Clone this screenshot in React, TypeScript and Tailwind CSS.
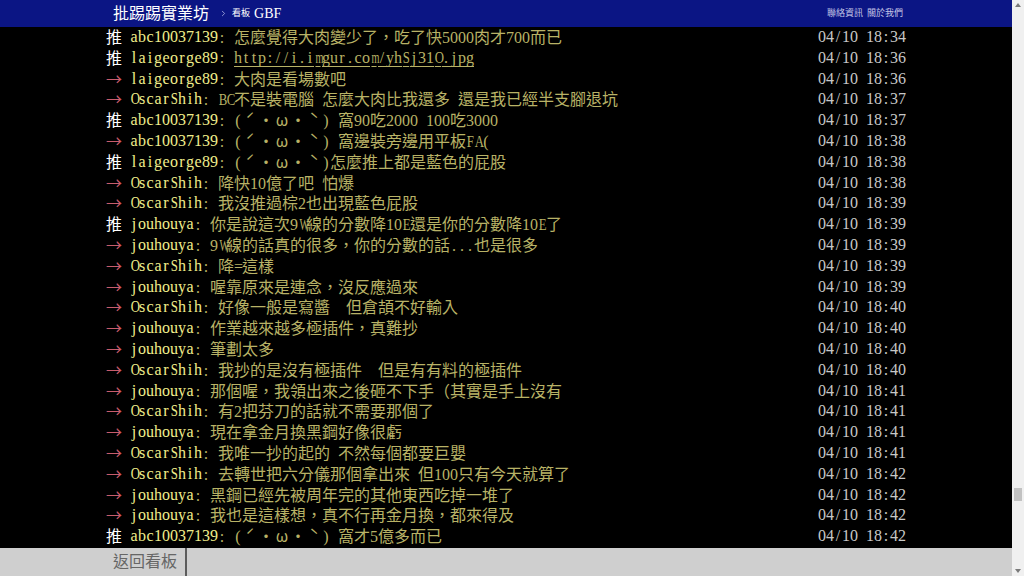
import { ChevronRight } from 'lucide-react';

type Push = {
  tag: '推' | '→';
  user: string;
  text: string;
  time: string;
  link?: boolean;
};

const face = '(ˊ・ω・ˋ)';

const pushes: Push[] = [
  { tag: '推', user: 'abc10037139', text: '怎麼覺得大肉變少了，吃了快5000肉才700而已', time: '04/10 18:34' },
  { tag: '推', user: 'laigeorge89', text: 'http://i.imgur.com/yhSj31O.jpg', time: '04/10 18:36', link: true },
  { tag: '→', user: 'laigeorge89', text: '大肉是看場數吧', time: '04/10 18:36' },
  { tag: '→', user: 'OscarShih', text: 'BC不是裝電腦 怎麼大肉比我還多 還是我已經半支腳退坑', time: '04/10 18:37' },
  { tag: '推', user: 'abc10037139', text: `${face} 窩90吃2000 100吃3000`, time: '04/10 18:37' },
  { tag: '→', user: 'abc10037139', text: `${face} 窩邊裝旁邊用平板FA(`, time: '04/10 18:38' },
  { tag: '推', user: 'laigeorge89', text: `${face}怎麼推上都是藍色的屁股`, time: '04/10 18:38' },
  { tag: '→', user: 'OscarShih', text: '降快10億了吧 怕爆', time: '04/10 18:38' },
  { tag: '→', user: 'OscarShih', text: '我沒推過棕2也出現藍色屁股', time: '04/10 18:39' },
  { tag: '推', user: 'jouhouya', text: '你是說這次9W線的分數降10E還是你的分數降10E了', time: '04/10 18:39' },
  { tag: '→', user: 'jouhouya', text: '9W線的話真的很多，你的分數的話...也是很多', time: '04/10 18:39' },
  { tag: '→', user: 'OscarShih', text: '降=這樣', time: '04/10 18:39' },
  { tag: '→', user: 'jouhouya', text: '喔靠原來是連念，沒反應過來', time: '04/10 18:39' },
  { tag: '→', user: 'OscarShih', text: '好像一般是寫醬  但倉頡不好輸入', time: '04/10 18:40' },
  { tag: '→', user: 'jouhouya', text: '作業越來越多極插件，真難抄', time: '04/10 18:40' },
  { tag: '→', user: 'jouhouya', text: '筆劃太多', time: '04/10 18:40' },
  { tag: '→', user: 'OscarShih', text: '我抄的是沒有極插件  但是有有料的極插件', time: '04/10 18:40' },
  { tag: '→', user: 'jouhouya', text: '那個喔，我領出來之後砸不下手（其實是手上沒有', time: '04/10 18:41' },
  { tag: '→', user: 'OscarShih', text: '有2把芬刀的話就不需要那個了', time: '04/10 18:41' },
  { tag: '→', user: 'jouhouya', text: '現在拿金月換黑鋼好像很虧', time: '04/10 18:41' },
  { tag: '→', user: 'OscarShih', text: '我唯一抄的起的 不然每個都要巨嬰', time: '04/10 18:41' },
  { tag: '→', user: 'OscarShih', text: '去轉世把六分儀那個拿出來 但100只有今天就算了', time: '04/10 18:42' },
  { tag: '→', user: 'jouhouya', text: '黑鋼已經先被周年完的其他東西吃掉一堆了', time: '04/10 18:42' },
  { tag: '→', user: 'jouhouya', text: '我也是這樣想，真不行再金月換，都來得及', time: '04/10 18:42' },
  { tag: '推', user: 'abc10037139', text: `${face} 窩才5億多而已`, time: '04/10 18:42' },
];

// glyphs that are too wide for a half cell get squeezed, like the bitmap font does
const veryWide = 'mwMW';
const wideish = 'OCBEFASDGHNQUVXKR';

function cellClass(ch: string) {
  if (ch.charCodeAt(0) > 0x7f) return "w-[16px] font-['Noto_Sans_CJK_TC',sans-serif]";
  if (veryWide.includes(ch)) return 'w-[8px] scale-x-[0.64]';
  if (wideish.includes(ch)) return 'w-[8px] scale-x-[0.8]';
  return 'w-[8px]';
}

// terminal grid: ascii takes a half cell (8px), everything else a full cell (16px)
function Cells({ text, underline }: { text: string; underline?: boolean }) {
  return (
    <>
      {Array.from(text).map((ch, i) => (
        <span
          key={i}
          className={`inline-block text-center ${cellClass(ch)} ${
            underline ? 'border-b border-current leading-[16px]' : ''
          }`}
        >
          {ch === ' ' ? '\u00a0' : ch}
        </span>
      ))}
    </>
  );
}

function PushRow({ p }: { p: Push }) {
  return (
    <div className="flex h-[20.8px] items-center whitespace-pre">
      <span className={p.tag === '推' ? 'text-white' : 'text-[#c85c6c]'}>
        <Cells text={p.tag + ' '} />
      </span>
      <span className="text-[#f0ee8c]">
        <Cells text={p.user} />
      </span>
      <span className="text-[#b8b266]">
        <Cells text=": " />
        <Cells text={p.text} underline={p.link} />
      </span>
      <span className="ml-auto text-[#c8c8c8]">
        <Cells text={p.time} />
      </span>
    </div>
  );
}

export default function App() {
  return (
    <div
      className="flex h-screen w-full overflow-hidden bg-black"
      style={{ fontFamily: '"Liberation Serif", "Noto Sans CJK TC", serif' }}
    >
      <div className="flex min-w-0 flex-1 flex-col">
        <header className="h-[27px] shrink-0 bg-[#0b1584]">
          <div className="mx-auto flex h-full w-[800px] items-center px-[7px]">
            <span className="text-[16px] text-white">批踢踢實業坊</span>
            <ChevronRight size={9} className="ml-[10px] text-[#b8bce8]" strokeWidth={2} />
            <span className="ml-[4px] text-[9px] text-white">看板</span>
            <span className="ml-[4px] text-[14px] text-white">GBF</span>
            <div className="ml-auto -mr-[4px] flex gap-[4px] text-[9px] text-[#c4c6e6]">
              <span>聯絡資訊</span>
              <span>關於我們</span>
            </div>
          </div>
        </header>

        <main className="min-h-0 flex-1 overflow-hidden">
          <div className="mx-auto w-[800px] text-[16px] leading-[1.3]">
            {pushes.map((p, i) => (
              <PushRow key={i} p={p} />
            ))}
          </div>
        </main>

        <footer className="h-[28px] shrink-0 bg-[#cfcfcf]">
          <div className="mx-auto flex h-full w-[800px]">
            <button className="flex h-full items-center border-r-2 border-[#5c5c5c] pl-[7px] pr-[8px] text-[16px] text-[#666]">
              返回看板
            </button>
          </div>
        </footer>
      </div>

      <div className="flex w-[12px] shrink-0 flex-col items-center justify-between bg-[#f0f0f0] py-[3px]">
        <span className="h-0 w-0 border-x-[3px] border-b-[4px] border-x-transparent border-b-[#7a7a7a]" />
        <div className="flex-1" />
        <div className="mb-[68px] h-[13px] w-[8px] bg-[#c2c2c2]" />
        <span className="h-0 w-0 border-x-[3px] border-t-[4px] border-x-transparent border-t-[#7a7a7a]" />
      </div>
    </div>
  );
}
